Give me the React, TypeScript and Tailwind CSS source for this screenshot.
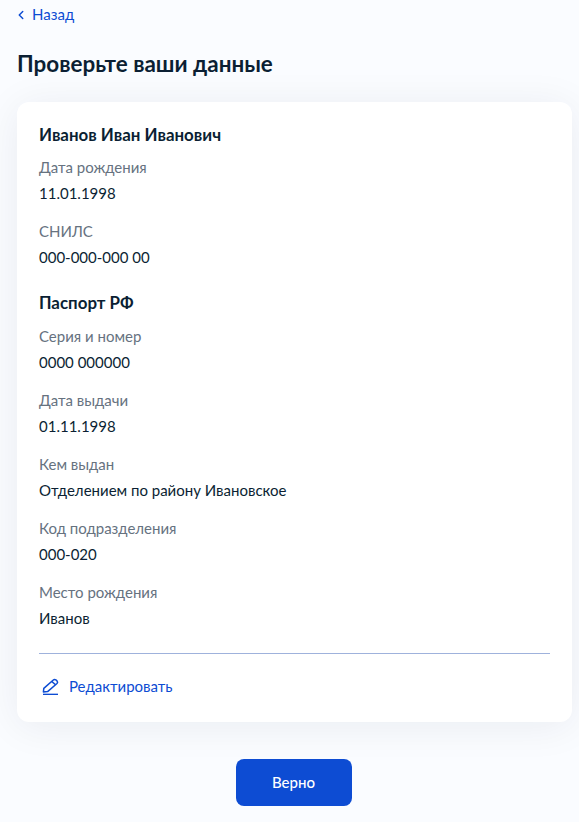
import { ChevronLeft } from 'lucide-react';

function Field({ label, value }: { label: string; value: string }) {
  return (
    <div className="mb-[13.8px]">
      <div className="text-[15px] leading-[24px] text-[#66727f]">{label}</div>
      <div className="mt-[2px] text-[15px] leading-[24px] text-[#0b1f33]">{value}</div>
    </div>
  );
}

function PencilIcon() {
  return (
    <svg className="ml-[3px]" width="18" height="18" viewBox="0 0 18 18" fill="none" stroke="#0d4cd3" strokeWidth="1.5" strokeLinejoin="round">
      <path d="M1.4 15 L1.8 11.4 L11 3.2 Q12.4 1.9 13.8 2.8 L15 3.9 Q16.2 5.2 15 6.5 L5.6 14.6 Z" />
      <path d="M9.6 4.4 L13.6 7.8" />
      <path d="M1 17.4 H16" />
    </svg>
  );
}

export default function App() {
  return (
    <div className="h-[822px] overflow-hidden bg-[#fafcff] pr-[7px] pl-[17px] font-['Lato','Noto_Sans',sans-serif]">
      <a className="flex h-[29px] items-center text-[15px] text-[#0d4cd3]">
        <ChevronLeft className="mr-[4px] ml-[-3px] h-[14px] w-[14px]" strokeWidth={2.5} />
        Назад
      </a>

      <h1 className="mt-[19px] text-[22.45px] leading-[32px] font-bold text-[#0b1f33]">Проверьте ваши данные</h1>

      <div className="mt-[22px] rounded-[12px] bg-white px-[22px] pt-[20px] pb-[24px] shadow-[0_4px_40px_rgba(11,31,51,0.07)]">
        <h2 className="text-[16.9px] leading-[26px] font-bold text-[#0b1f33]">Иванов Иван Иванович</h2>
        <div className="mt-[7px]">
          <Field label="Дата рождения" value="11.01.1998" />
          <Field label="СНИЛС" value="000-000-000 00" />
        </div>

        <h2 className="mt-[21.6px] text-[16.9px] leading-[26px] font-bold text-[#0b1f33]">Паспорт РФ</h2>
        <div className="mt-[8px]">
          <Field label="Серия и номер" value="0000 000000" />
          <Field label="Дата выдачи" value="01.11.1998" />
          <Field label="Кем выдан" value="Отделением по району Ивановское" />
          <Field label="Код подразделения" value="000-020" />
          <Field label="Место рождения" value="Иванов" />
        </div>

        <div className="mt-[23px] border-t border-[#9fb2dc]" />

        <a className="mt-[20px] flex items-center gap-[9px] text-[15px] leading-[24px] text-[#0d4cd3]">
          <PencilIcon />
          Редактировать
        </a>
      </div>

      <div className="mt-[37px] flex justify-center">
        <button className="mr-[2px] h-[47px] w-[116px] rounded-[8px] bg-[#0d4cd3] text-[15px] font-medium text-white">Верно</button>
      </div>
    </div>
  );
}
